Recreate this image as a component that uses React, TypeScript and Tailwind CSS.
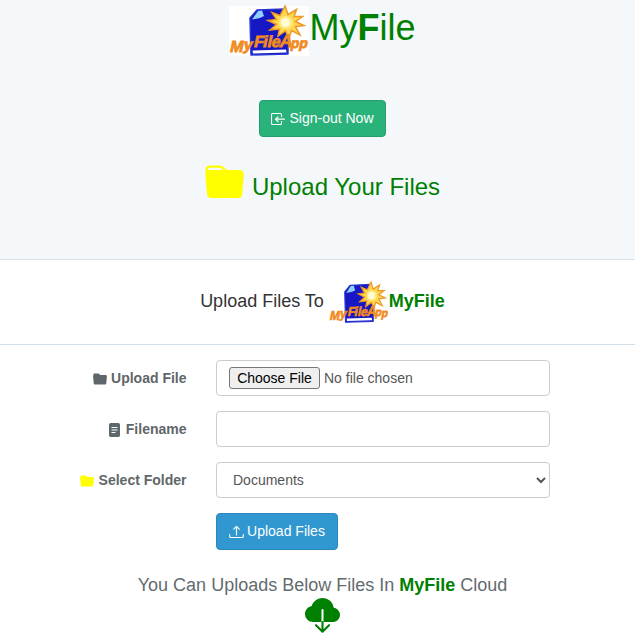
function Logo({ className }: { className: string }) {
  return (
    <svg viewBox="0 0 80 50" preserveAspectRatio="none" overflow="visible" className={className}>
      <rect width="80" height="50" fill="#fff" />
      <path d="M28 4 L56 3 L59 10 L59 48 L22 49 L21 12 Z" fill="#1717c4" stroke="#2335d3" strokeWidth="1.5" strokeLinejoin="round" />
      <path d="M29 5 L33 4.5 L35 10 L31 12 L23 13.5 Z" fill="#8fcfff" />
      <path d="M23.5 44.5 L57 43.5 L57.5 46.5 L24 47.5 Z" fill="#fff" />
      <path d="M56 0 L59 8.5 L67.5 3.5 L65 10.5 L73.5 10.5 L66.5 15.5 L75 19.5 L66.5 20.5 L71 29 L62.5 24.5 L60 32 L56.5 25 L49 30 L50.5 23 L41 24 L47.5 18.5 L39 14.5 L47.5 13.5 L43 6.5 L51 9.5 Z" fill="#ffd650" stroke="#ee9725" strokeWidth="1.5" />
      <ellipse cx="57" cy="16.5" rx="7" ry="6.5" fill="#ffe982" />
      <ellipse cx="56.5" cy="16.5" rx="4.5" ry="4.5" fill="#fffbd2" />
      <text
        transform="skewX(-12)"
        x="10 23 33 42 46.5 50.5 58.5 70 78.5"
        y="46 44 41.5 41.5 41.5 41.5 41.5 42 42.5"
        fill="#f28b1d"
        stroke="#f28b1d"
        strokeWidth="0.8"
        fontFamily="Liberation Sans, sans-serif"
        fontWeight="bold"
        fontSize="16"
      >
        MyFile<tspan fontSize="18">A</tspan><tspan fontSize="14">pp</tspan>
      </text>
    </svg>
  );
}

function FolderLarge() {
  return (
    <svg viewBox="0 0 39 34" className="mt-[3px] h-[34px] w-[39px]">
      <path fillRule="evenodd" fill="yellow" d="M4.5 .5H14C16 .5 17.5 1 19 2.5L20.5 4C21.500 4.600 22 5 24 5H34.5C37.500 5 39 7 38.800 9.500L37.200 29C37 31.500 35.500 33 33 33H6.500C3.700 33 2.200 31.500 2 29L.400 10C.200 8 .500 6 .700 4C.800 2 2.300 .500 4.500 .500ZM3 5.300C4 5 5 5 6 5H18L16.800 3.800C16 3 15 2.700 14 2.700H4.800C3.600 2.700 3 3.500 3 4.500Z" />
    </svg>
  );
}

function FolderSmall({ className }: { className: string }) {
  return (
    <svg viewBox="0 0 14 12" fill="currentColor" className={className}>
      <path d="M1.800 .5H5.200C6.500 .5 6.500 2 7.800 2H12.300C13.500 2 14 2.600 13.900 3.600L13.300 10C13.200 11 12.700 11.500 11.700 11.500H2.300C1.300 11.500 .800 11 .700 10L.100 3.600C0 3 .400 2.400 .400 1.900C.400 1 .900 .500 1.800 .500Z" />
    </svg>
  );
}

function SignOutIcon() {
  return (
    <svg viewBox="0 0 14 14" fill="none" stroke="currentColor" strokeLinecap="round" strokeLinejoin="round" className="mt-px h-[14px] w-[14px]">
      <path d="M10.500 4.500V2.500Q10.500 1.500 9.500 1.500H1.500Q.500 1.500 .500 2.500V11.500Q.500 12.500 1.500 12.500H9.500Q10.500 12.500 10.500 11.500V9.500" strokeWidth="1.100" />
      <path d="M13.300 7.200H5M7 4.900L4.600 7.200L7 9.500" strokeWidth="1.300" />
    </svg>
  );
}

function FileIcon() {
  return (
    <svg viewBox="0 0 11 14" className="mr-[1.5px] mt-[2px] h-[14px] w-[11px]">
      <rect width="11" height="14" rx="1.8" fill="#5d686d" />
      <path d="M3 4.500H8M3 7H8M3 9.500H6" stroke="#fff" strokeWidth="1.200" strokeLinecap="round" />
    </svg>
  );
}

function UploadIcon() {
  return (
    <svg viewBox="0 0 15 14" fill="none" stroke="currentColor" strokeLinecap="round" strokeLinejoin="round" className="mt-px h-[14px] w-[15px]">
      <path d="M.700 9.500V11.500Q.700 12.500 1.700 12.500H13.300Q14.300 12.500 14.300 11.500V9.500" strokeWidth="1.100" />
      <path d="M7.500 10V1.500M4.700 4.200L7.500 1.400L10.300 4.200" strokeWidth="1.200" />
    </svg>
  );
}

function CloudIcon() {
  return (
    <svg viewBox="0 0 35 35" className="mt-[3px] h-[35px] w-[35px]">
      <path fill="green" d="M17.500 0C23.400 0 28.100 4.300 28.700 9.700C32.200 10.200 35 13.200 35 16.900C35 20.900 31.500 24 27.500 24H8.300C3.800 24 0 20.500 0 16C0 12.100 2.900 8.900 6.700 8.100C7 6.300 8.200 4.400 9.900 2.900C12 1.100 14.700 0 17.500 0Z" />
      <path d="M17.500 12V24" stroke="#fff" strokeWidth="2" strokeLinecap="round" />
      <path d="M17.500 24V33.500M11 27.200L17.500 33.700L24 27.200" fill="none" stroke="green" strokeWidth="2.100" strokeLinecap="round" strokeLinejoin="round" />
    </svg>
  );
}

const control = "h-9 w-[334px] rounded border border-[#ccc] bg-white text-[14px] text-[#555]";
const label = "flex w-[186.5px] items-center justify-end gap-1 font-bold text-[#5f6669]";

export default function App() {
  return (
    <div className="h-[644px] w-[635px] overflow-hidden bg-white text-[14px] [font-family:'Liberation_Sans',Arial,sans-serif]">
      <header className="flex h-[260px] flex-col items-center border-b border-[#d3e0e9] bg-[#f5f8fb] pl-[10px]">
        <div className="flex h-[56px] items-start pt-[6px] text-[36px] leading-[42px] text-[green]">
          <Logo className="h-[50px] w-[80px]" />
          <h1 className="mt-px">My<b>F</b>ile</h1>
        </div>
        <button className="mt-[44px] flex h-[37px] w-[127px] items-center justify-center gap-1 rounded border border-[#259d6d] bg-[#2ab27b] text-white">
          <SignOutIcon /><span>Sign-out Now</span>
        </button>
        <h2 className="mt-[25px] flex h-[50px] items-start gap-2 text-[24px] leading-[50px] text-[green]">
          <FolderLarge /><span>Upload Your Files</span>
        </h2>
      </header>
      <section className="flex h-[85px] items-center justify-center border-b border-[#d3e0e9] pl-[10px] text-[18px] text-[#333]">
        <span className="mr-[5px] pb-[2px]">Upload Files To</span>
        <Logo className="h-[41px] w-[60px]" />
        <b className="pb-[2px] text-[green]">MyFile</b>
      </section>
      <form className="flex flex-col gap-[15px] pt-[15px]" onSubmit={(e) => e.preventDefault()}>
        <div className="flex gap-[29.5px]">
          <label className={label}><FolderSmall className="mt-px h-[12px] w-[14px]" /><span>Upload File</span></label>
          <div className={`${control} flex items-center gap-1 pl-3`}>
            <button type="button" className="h-[22px] w-[91px] rounded-[3px] border border-[#767676] bg-[#efefef] text-black">Choose File</button>
            <span>No file chosen</span>
          </div>
        </div>
        <div className="flex gap-[29.5px]">
          <label className={label}><FileIcon /><span>Filename</span></label>
          <input className={control} />
        </div>
        <div className="flex gap-[29.5px]">
          <label className={label}><FolderSmall className="mr-px mt-px h-[12px] w-[14px] text-[yellow]" /><span>Select Folder</span></label>
          <select className={`${control} pl-3`}><option>Documents</option></select>
        </div>
        <button className="ml-[216px] flex h-[37px] w-[122px] items-center justify-center gap-[3px] rounded border border-[#2a88bd] bg-[#3097d1] text-white">
          <UploadIcon /><span>Upload Files</span>
        </button>
      </form>
      <div className="mt-[25px] flex flex-col items-center pl-[10px] text-[18px] leading-5 text-[#636b6f]">
        <p>You Can Uploads Below Files In <b className="text-[green]">MyFile</b> Cloud</p>
        <CloudIcon />
      </div>
    </div>
  );
}
